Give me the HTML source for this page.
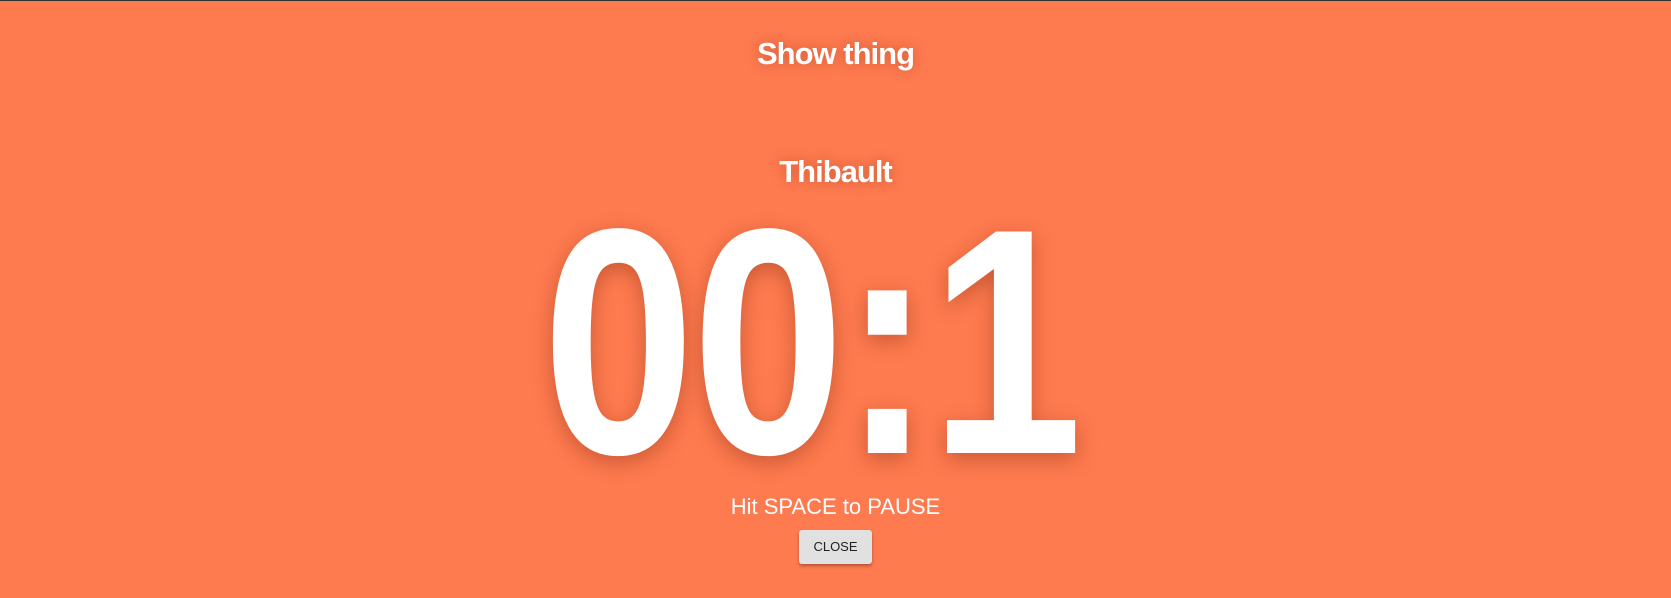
<!DOCTYPE html>
<html><head><style>
html,body{margin:0;padding:0}
body{width:1671px;height:598px;background:#fe7a4f;position:relative;overflow:hidden;font-family:"Liberation Sans",Arial,sans-serif;color:#fff;border-top:1px solid #333;box-sizing:border-box}
.t{position:absolute;left:0;width:1671px;text-align:center;font-weight:bold;text-shadow:0 0 12px rgba(150,60,30,.45)}
#a{top:35px;font-size:31px;letter-spacing:-1px}
#b{top:153px;font-size:31px;letter-spacing:-1px}
#big{position:absolute;left:542px;top:181px;font-size:322px;font-weight:bold;line-height:1;white-space:nowrap;transform-origin:0 0;transform:scaleX(0.855);letter-spacing:-4px;text-shadow:0 6px 22px rgba(140,50,20,.45)}
#hit{position:absolute;left:0;width:1671px;text-align:center;top:493px;font-size:22px}
#btn{position:absolute;left:799px;top:529px;width:73px;height:34px;background:#e1e1e1;border-radius:3px;box-shadow:0 2px 3px rgba(0,0,0,.3);color:#222;font-size:13px;text-align:center;line-height:34px}
</style></head><body>
<div class="t" id="a">Show thing</div>
<div class="t" id="b">Thibault</div>
<div id="big">00:1</div>
<div id="hit">Hit SPACE to PAUSE</div>
<div id="btn">CLOSE</div>
</body></html>
